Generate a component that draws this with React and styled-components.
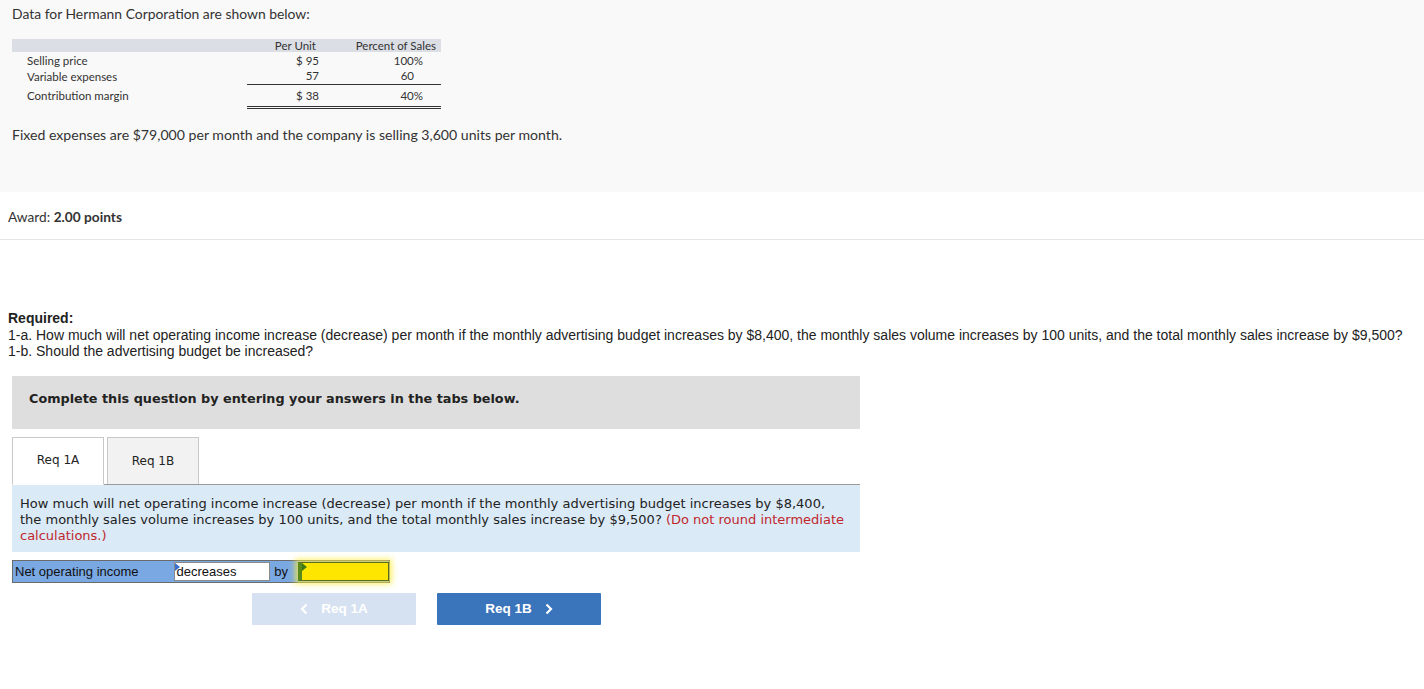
import React from "react";
import styled, { createGlobalStyle } from "styled-components";

const Global = createGlobalStyle`
  html, body { margin: 0; padding: 0; background: #fff; }
  body { font-family: "Lato", "Open Sans", sans-serif; color: #333; }
`;

const Intro = styled.section`
  background: #f9f9f9;
  padding: 6px 12px 0;
  height: 186px;
`;

const IntroText = styled.p`
  margin: 0;
  font-size: ${(p) => p.$size || 13.8}px;
  line-height: 16px;
  color: #333;
`;

const DataTable = styled.table`
  margin-top: 17px;
  border-collapse: collapse;
  table-layout: fixed;
  font-size: 11.5px;
  color: #333;
`;

const HeadRow = styled.tr`
  background: #dcdee5;
  height: 13px;
  line-height: 12px;
`;

const Row = styled.tr`
  height: ${(p) => p.$h}px;
`;

const LabelCell = styled.td`
  box-sizing: border-box;
  width: 235px;
  padding: 0 0 0 15px;
  vertical-align: middle;
`;

const NumCell = styled.td`
  box-sizing: border-box;
  text-align: right;
  padding: 0 ${(p) => p.$pr}px 0 0;
  width: ${(p) => p.$w}px;
  border-top: ${(p) => (p.$top ? "1px solid #333" : "none")};
  border-bottom: ${(p) => (p.$double ? "3px double #333" : "none")};
  vertical-align: middle;
`;

const Fixed = styled(IntroText)`
  margin-top: 18px;
`;

const Award = styled.div`
  height: 46px;
  border-bottom: 1px solid #e6e6e6;
  display: flex;
  align-items: center;
  padding-left: 8px;
  font-size: 13.7px;
  color: #333;
  padding-top: 1px;
`;

const Bold = styled.b`
  font-weight: 700;
`;

const Required = styled.div`
  margin-top: 70px;
  padding-left: 8px;
  font-family: "Liberation Sans", Arial, sans-serif;
  font-size: 14px;
  line-height: 16.5px;
  color: #222;
`;

const ReqTitle = styled.div`
  font-weight: 700;
`;

const Work = styled.div`
  margin: 16px 0 0 12px;
  width: 848px;
  font-family: "DejaVu Sans", Verdana, sans-serif;
`;

const Banner = styled.div`
  background: #dedede;
  height: 53px;
  box-sizing: border-box;
  display: flex;
  align-items: center;
  padding: 0 0 7px 17px;
  font-weight: 700;
  font-size: 12.8px;
  color: #222;
`;

const Tabs = styled.div`
  margin-top: 8px;
  display: flex;
  gap: 3px;
  border-bottom: 1px solid #9a9a9a;
  height: 47px;
  align-items: flex-end;
`;

const Tab = styled.div`
  width: 92px;
  box-sizing: border-box;
  border: 1px solid #c8c8c8;
  border-bottom: ${(p) => (p.$active ? "1px solid #fff" : "none")};
  margin-bottom: ${(p) => (p.$active ? "-1px" : "0")};
  height: ${(p) => (p.$active ? "48px" : "47px")};
  background: ${(p) => (p.$active ? "#fff" : "#f2f2f2")};
  display: flex;
  align-items: center;
  justify-content: center;
  font-size: 12px;
  color: #222;
  padding-bottom: ${(p) => (p.$active ? "2px" : "0")};
`;

const Prompt = styled.div`
  background: #dbeaf7;
  padding: 11px 8px 8px;
  font-size: 13px;
  line-height: 16px;
  color: #222;
`;

const Note = styled.span`
  color: #c0272d;
`;

const AnswerRow = styled.div`
  margin-top: 8px;
  display: flex;
  width: 378px;
  height: 23px;
  box-sizing: border-box;
  border: 1px solid #6b6b6b;
  background: #7aa8e2;
  font-family: "Liberation Sans", Arial, sans-serif;
  font-size: 13px;
  color: #111;
`;

const AnsLabel = styled.div`
  width: ${(p) => p.$w}px;
  display: flex;
  align-items: center;
  padding-left: ${(p) => p.$pl}px;
  box-sizing: border-box;
`;

const Field = styled.div`
  position: relative;
  width: ${(p) => p.$w}px;
  margin: 1px 0;
  box-sizing: border-box;
  background: ${(p) => (p.$yellow ? "#ffe600" : "#fff")};
  border: 1px solid ${(p) => (p.$yellow ? "#5d6d1f" : "#8a8a8a")};
  border-left: ${(p) => (p.$yellow ? "4px solid #5a8a1c" : "1px solid #8a8a8a")};
  display: flex;
  align-items: center;
  padding-left: 2px;
  box-shadow: ${(p) => (p.$yellow ? "0 0 6px 3px rgba(255, 236, 60, 0.75)" : "none")};
`;

const Flag = styled.span`
  position: absolute;
  left: 0;
  top: 0;
  width: 0;
  height: 0;
  border-top: 4px solid transparent;
  border-bottom: 4px solid transparent;
  border-left: 5px solid ${(p) => (p.$yellow ? "#3f7a18" : "#3a6fd0")};
`;

const Nav = styled.div`
  margin: 10px 0 0 240px;
  display: flex;
  gap: 21px;
`;

const NavButton = styled.button`
  width: 164px;
  height: 32px;
  border: none;
  border-radius: 1px;
  background: ${(p) => (p.$disabled ? "#d6e2f1" : "#3a74bb")};
  color: #fff;
  font-family: "Liberation Sans", Arial, sans-serif;
  font-weight: 700;
  font-size: 13.5px;
  display: flex;
  align-items: center;
  justify-content: center;
  gap: 12px;
  padding: 0;
`;

const Chevron = ({ dir }) => (
  <svg width="9" height="12" viewBox="0 0 9 12">
    <path
      d={dir === "left" ? "M6.5 1.5 L2 6 L6.5 10.5" : "M2.5 1.5 L7 6 L2.5 10.5"}
      fill="none"
      stroke="#fff"
      strokeWidth="2.2"
    />
  </svg>
);

export default function App() {
  return (
    <>
      <Global />
      <Intro>
        <IntroText $size={13.9}>Data for Hermann Corporation are shown below:</IntroText>
        <DataTable>
          <tbody>
            <HeadRow>
              <LabelCell />
              <NumCell $w={96} $pr={27}>Per Unit</NumCell>
              <NumCell $w={98} $pr={5}>Percent of Sales</NumCell>
            </HeadRow>
            <Row $h={16}>
              <LabelCell>Selling price</LabelCell>
              <NumCell $w={96} $pr={24}>$ 95</NumCell>
              <NumCell $w={98} $pr={18}>100%</NumCell>
            </Row>
            <Row $h={16}>
              <LabelCell>Variable expenses</LabelCell>
              <NumCell $w={96} $pr={24}>57</NumCell>
              <NumCell $w={98} $pr={27}>60</NumCell>
            </Row>
            <Row $h={23}>
              <LabelCell>Contribution margin</LabelCell>
              <NumCell $w={96} $pr={24} $top $double>$ 38</NumCell>
              <NumCell $w={98} $pr={18} $top $double>40%</NumCell>
            </Row>
          </tbody>
        </DataTable>
        <Fixed $size={14.1}>
          Fixed expenses are $79,000 per month and the company is selling 3,600 units per month.
        </Fixed>
      </Intro>
      <Award>
        Award:&nbsp;<Bold>2.00 points</Bold>
      </Award>
      <Required>
        <ReqTitle>Required:</ReqTitle>
        <div>
          1-a. How much will net operating income increase (decrease) per month if the monthly advertising
          budget increases by $8,400, the monthly sales volume increases by 100 units, and the total monthly
          sales increase by $9,500?
        </div>
        <div>1-b. Should the advertising budget be increased?</div>
      </Required>
      <Work>
        <Banner>Complete this question by entering your answers in the tabs below.</Banner>
        <Tabs>
          <Tab $active>Req 1A</Tab>
          <Tab>Req 1B</Tab>
        </Tabs>
        <Prompt>
          How much will net operating income increase (decrease) per month if the monthly advertising budget
          increases by $8,400,
          <br />
          the monthly sales volume increases by 100 units, and the total monthly sales increase by $9,500?{" "}
          <Note>(Do not round intermediate calculations.)</Note>
        </Prompt>
        <AnswerRow>
          <AnsLabel $w={161} $pl={2}>Net operating income</AnsLabel>
          <Field $w={97}>
            <Flag />
            decreases
          </Field>
          <AnsLabel $w={28} $pl={4}>by</AnsLabel>
          <Field $w={91} $yellow>
            <Flag $yellow />
          </Field>
        </AnswerRow>
        <Nav>
          <NavButton $disabled>
            <Chevron dir="left" />
            Req 1A
          </NavButton>
          <NavButton>
            Req 1B
            <Chevron dir="right" />
          </NavButton>
        </Nav>
      </Work>
    </>
  );
}
